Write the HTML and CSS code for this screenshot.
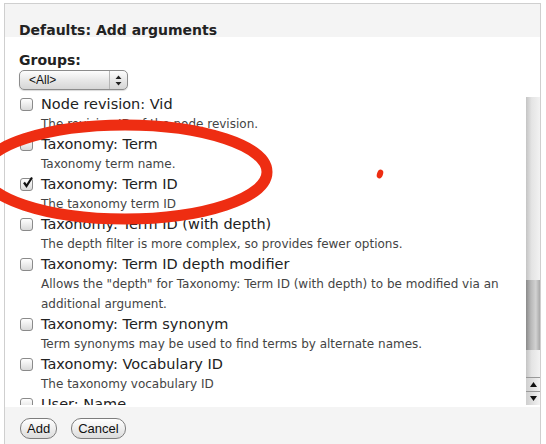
FILE: index.html
```html
<!DOCTYPE html>
<html lang="en">
<head>
    <meta charset="UTF-8">
    <title>Defaults: Add arguments</title>
    <link rel="stylesheet" href="styles.css">
</head>
<body>
    <div class="dialog">
        <div class="dialog-head">
            <h2>Defaults: Add arguments</h2>
        </div>

        <div class="dialog-body">
            <div class="groups-label">Groups:</div>
            <div class="select">
                <span class="select-value">&lt;All&gt;</span>
                <span class="select-arrows">
                    <svg width="7" height="11" viewBox="0 0 7 11"><path d="M3.5 0.5 L6.5 4 L0.5 4 Z M0.5 7 L6.5 7 L3.5 10.5 Z" fill="#222"/></svg>
                </span>
            </div>

            <div class="list-wrap">
                <div class="list">
                    <div class="item">
                        <span class="check"></span>
                        <div class="item-text">
                            <div class="item-label">Node revision: Vid</div>
                            <div class="item-desc">The revision ID of the node revision.</div>
                        </div>
                    </div>
                    <div class="item">
                        <span class="check"></span>
                        <div class="item-text">
                            <div class="item-label">Taxonomy: Term</div>
                            <div class="item-desc">Taxonomy term name.</div>
                        </div>
                    </div>
                    <div class="item">
                        <span class="check checked">
                            <svg width="13" height="13" viewBox="0 0 13 13"><path d="M3 6.5 L5.5 10 L11 1.5" fill="none" stroke="#111" stroke-width="2.2"/></svg>
                        </span>
                        <div class="item-text">
                            <div class="item-label">Taxonomy: Term ID</div>
                            <div class="item-desc">The taxonomy term ID</div>
                        </div>
                    </div>
                    <div class="item">
                        <span class="check"></span>
                        <div class="item-text">
                            <div class="item-label">Taxonomy: Term ID (with depth)</div>
                            <div class="item-desc">The depth filter is more complex, so provides fewer options.</div>
                        </div>
                    </div>
                    <div class="item">
                        <span class="check"></span>
                        <div class="item-text">
                            <div class="item-label">Taxonomy: Term ID depth modifier</div>
                            <div class="item-desc">Allows the "depth" for Taxonomy: Term ID (with depth) to be modified via an additional argument.</div>
                        </div>
                    </div>
                    <div class="item">
                        <span class="check"></span>
                        <div class="item-text">
                            <div class="item-label">Taxonomy: Term synonym</div>
                            <div class="item-desc">Term synonyms may be used to find terms by alternate names.</div>
                        </div>
                    </div>
                    <div class="item">
                        <span class="check"></span>
                        <div class="item-text">
                            <div class="item-label">Taxonomy: Vocabulary ID</div>
                            <div class="item-desc">The taxonomy vocabulary ID</div>
                        </div>
                    </div>
                    <div class="item">
                        <span class="check"></span>
                        <div class="item-text">
                            <div class="item-label">User: Name</div>
                        </div>
                    </div>
                </div>

                <div class="scrollbar">
                    <div class="scroll-track"></div>
                    <div class="scroll-thumb"></div>
                    <div class="scroll-track scroll-track-end"></div>
                    <div class="scroll-btn">
                        <svg width="7" height="5" viewBox="0 0 7 5"><path d="M3.5 0 L7 5 L0 5 Z" fill="#111"/></svg>
                    </div>
                    <div class="scroll-btn">
                        <svg width="7" height="5" viewBox="0 0 7 5"><path d="M0 0 L7 0 L3.5 5 Z" fill="#111"/></svg>
                    </div>
                </div>
            </div>
        </div>

        <div class="dialog-foot">
            <button class="pill">Add</button>
            <button class="pill">Cancel</button>
        </div>
    </div>

    <!-- hand-drawn marker over the screenshot -->
    <svg class="scribble" width="546" height="444" viewBox="0 0 546 444">
        <ellipse cx="125" cy="172" rx="142" ry="47" fill="none" stroke="#ee2d12" stroke-width="11"/>
        <ellipse cx="380" cy="174" rx="3" ry="4.5" transform="rotate(20 380 174)" fill="#ee2d12"/>
    </svg>
</body>
</html>
```

FILE: styles.css
```css
body {
    margin: 0;
    padding: 3px 0 0 4px;
    background: #fff;
    font-family: "DejaVu Sans", Verdana, sans-serif;
    color: #222;
    height: 441px;
    overflow: hidden;
    position: relative;
}

.dialog {
    width: 537px;
    height: 441px;
    box-sizing: border-box;
    border: 1px solid #cfcfcf;
    border-bottom: none;
    display: flex;
    flex-direction: column;
}

.dialog-head {
    background: #f4f4f4;
    height: 33px;
    box-sizing: border-box;
    padding: 18px 0 0 14px;
}

.dialog-head h2 {
    margin: 0;
    font-size: 14px;
    line-height: 16px;
    font-weight: bold;
    color: #222;
}

.dialog-body {
    padding: 15px 0 0 14px;
}

.groups-label {
    font-size: 14px;
    line-height: 16px;
    font-weight: bold;
}

.select {
    margin-top: 2px;
    width: 109px;
    height: 20px;
    box-sizing: border-box;
    border: 1px solid #8c8c8c;
    border-radius: 5px;
    background: linear-gradient(#fdfdfd, #e6e6e6 55%, #d6d6d6);
    box-shadow: 0 1px 1px rgba(0, 0, 0, 0.15);
    display: flex;
    align-items: center;
    font-family: "Liberation Sans", Arial, sans-serif;
    font-size: 12px;
    color: #111;
}

.select-value {
    flex: 1;
    padding-left: 9px;
}

.select-arrows {
    width: 17px;
    height: 18px;
    border-left: 1px solid #b5b5b5;
    display: flex;
    align-items: center;
    justify-content: center;
}

.list-wrap {
    margin-top: 4px;
    height: 311px;
    display: flex;
}

.list {
    flex: 1;
    overflow: hidden;
    padding-right: 10px;
}

.item {
    display: flex;
}

.check {
    flex: 0 0 auto;
    width: 13px;
    height: 13px;
    margin: 4px 8px 0 1px;
    border: 1px solid #8a8a8a;
    border-radius: 3px;
    background: linear-gradient(#fff, #e9e9e9 60%, #d9d9d9);
    box-sizing: border-box;
    position: relative;
}

.check svg {
    position: absolute;
    left: 0;
    top: -3px;
}

.item-label {
    font-size: 14.5px;
    line-height: 20px;
    color: #222;
}

.item-desc {
    font-size: 12px;
    line-height: 20px;
    color: #444;
}

.scrollbar {
    width: 14px;
    margin-top: 3px;
    display: flex;
    flex-direction: column;
}

.scroll-track {
    height: 183px;
    background: linear-gradient(to right, #c4c4c4, #e4e4e4 40%, #f2f2f2);
}

.scroll-track-end {
    height: 27px;
}

.scroll-thumb {
    height: 70px;
    background: linear-gradient(to right, #8a8a8a, #b8b8b8 35%, #d2d2d2 70%, #a8a8a8);
}

.scroll-btn {
    height: 13px;
    border-top: 1px solid #999;
    background: linear-gradient(to right, #cfcfcf, #f4f4f4);
    display: flex;
    align-items: center;
    justify-content: center;
}

.dialog-foot {
    margin-top: 2px;
    flex: 1;
    background: #f4f4f4;
    padding: 11px 0 0 15px;
    display: flex;
    align-items: flex-start;
    gap: 14px;
}

.pill {
    margin: 0;
    padding: 1px 6px;
    border: 1px solid #7d7d7d;
    border-radius: 10px;
    background: linear-gradient(#ffffff, #eeeeee 50%, #dcdcdc);
    font-family: "Liberation Sans", Arial, sans-serif;
    font-size: 13px;
    line-height: 17px;
    color: #111;
}

.scribble {
    position: absolute;
    left: 0;
    top: 0;
    pointer-events: none;
}
```
